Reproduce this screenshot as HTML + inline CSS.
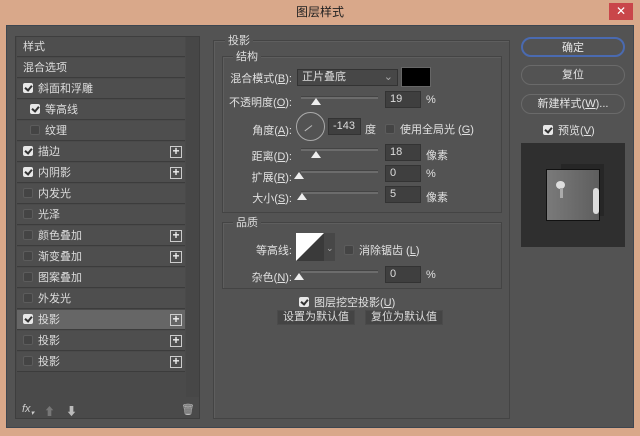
<!DOCTYPE html>
<html><head><meta charset="utf-8"><style>
*{margin:0;padding:0;box-sizing:border-box}
body{width:640px;height:436px;background:#d9a88a;position:relative;overflow:hidden;font-family:"Liberation Sans","Noto Sans CJK SC",sans-serif;font-size:11px;color:#e0e0e0}
.a{position:absolute}
.title{left:0;top:0;width:640px;height:25px;text-align:center;line-height:25px;font-size:12px;color:#222}
.close{left:609px;top:3px;width:24px;height:17px;background:#c9464a;color:#fff;text-align:center;line-height:17px;font-size:12px}
.dlg{left:6px;top:25px;width:628px;height:403px;background:#535353;border:1px solid #3d4650}
.list{left:15px;top:36px;width:185px;height:383px;background:#4a4a4a;border:1px solid #3e3e3e}
.row{position:absolute;left:1px;width:168px;height:20px;background:#4e4e4e;border-bottom:1px solid #3c3c3c;line-height:20px;padding-left:6px;color:#ddd}
.row.sel{background:#666}
.cb{display:inline-block;width:10px;height:10px;border-radius:2px;background:#444;border:1px solid #5c5c5c;vertical-align:-1px;margin-right:5px;position:relative}
.cb.on{background:#e8e8e8;border-color:#e8e8e8}
.cb.on:after{content:"";position:absolute;left:2px;top:0px;width:3px;height:5px;border:solid #333;border-width:0 2px 2px 0;transform:rotate(40deg)}
.plus{position:absolute;right:3px;top:4px;width:12px;height:12px;border:1px solid #ccc;line-height:9px;text-align:center;font-size:12px;color:#eee;font-weight:bold}
.grp{border:1px solid #444;box-shadow:1px 1px 0 #5e5e5e inset}
.lbl{position:absolute;background:#535353;padding:0 3px;color:#ddd}
.r{text-align:right;width:80px}
.slider{position:absolute;height:3px;background:#6c6c6c;border-top:1px solid #444}
.thumb{position:absolute;width:0;height:0;border-left:5px solid transparent;border-right:5px solid transparent;border-bottom:7px solid #eee}
.in{position:absolute;height:17px;background:#3f3f3f;border:1px solid #333;line-height:15px;padding-left:4px;color:#ddd}
.btn{position:absolute;left:521px;width:104px;height:20px;border:1px solid #6a6a6a;border-radius:10px;text-align:center;line-height:18px;color:#e6e6e6}
.sbtn{position:absolute;height:15px;background:#444;border:1px solid #4b4b4b;text-align:center;line-height:13px;color:#ddd}
</style></head><body>
<div class="a title">图层样式</div>
<div class="a close">✕</div>
<div class="a dlg"></div>
<div class="a list">
<div class="row" style="top:0">样式</div>
<div class="row" style="top:21px">混合选项</div>
<div class="row" style="top:42px"><span class="cb on"></span>斜面和浮雕</div>
<div class="row" style="top:63px;padding-left:13px"><span class="cb on"></span>等高线</div>
<div class="row" style="top:84px;padding-left:13px"><span class="cb"></span>纹理</div>
<div class="row" style="top:105px"><span class="cb on"></span>描边<span class="plus">+</span></div>
<div class="row" style="top:126px"><span class="cb on"></span>内阴影<span class="plus">+</span></div>
<div class="row" style="top:147px"><span class="cb"></span>内发光</div>
<div class="row" style="top:168px"><span class="cb"></span>光泽</div>
<div class="row" style="top:189px"><span class="cb"></span>颜色叠加<span class="plus">+</span></div>
<div class="row" style="top:210px"><span class="cb"></span>渐变叠加<span class="plus">+</span></div>
<div class="row" style="top:231px"><span class="cb"></span>图案叠加</div>
<div class="row" style="top:252px"><span class="cb"></span>外发光</div>
<div class="row sel" style="top:273px"><span class="cb on"></span>投影<span class="plus">+</span></div>
<div class="row" style="top:294px"><span class="cb"></span>投影<span class="plus">+</span></div>
<div class="row" style="top:315px"><span class="cb"></span>投影<span class="plus">+</span></div>
<div class="a" style="left:170px;top:0;width:13px;height:360px;background:#474747"></div>
<div class="a" style="left:6px;top:366px;color:#ccc;font-style:italic;font-size:11px">fx<sub style="font-size:7px">▾</sub></div>
<div class="a" style="left:28px;top:366px;color:#777">⬆</div>
<div class="a" style="left:50px;top:366px;color:#bbb">⬇</div>
<div class="a" style="left:165px;top:366px;color:#bbb">🗑</div>
</div>

<div class="a grp" style="left:213px;top:40px;width:297px;height:379px"></div>
<div class="lbl" style="left:225px;top:32px">投影</div>
<div class="a grp" style="left:222px;top:56px;width:280px;height:157px"></div>
<div class="lbl" style="left:233px;top:48px">结构</div>

<div class="a r" style="left:212px;top:70px">混合模式(<u>B</u>):</div>
<div class="in" style="left:297px;top:69px;width:101px;background:#474747">正片叠底<span style="position:absolute;right:4px;color:#aaa">⌄</span></div>
<div class="a" style="left:401px;top:67px;width:30px;height:20px;background:#000;border:1px solid #666"></div>

<div class="a r" style="left:212px;top:94px">不透明度(<u>O</u>):</div>
<div class="slider" style="left:301px;top:96px;width:77px"></div><div class="thumb" style="left:311px;top:98px"></div>
<div class="in" style="left:385px;top:91px;width:36px">19</div><div class="a" style="left:426px;top:94px">%</div>

<div class="a r" style="left:212px;top:122px">角度(<u>A</u>):</div>
<div class="a" style="left:296px;top:112px;width:29px;height:29px;border:1px solid #aaa;border-radius:50%"></div>
<div class="a" style="left:303px;top:125px;width:9px;height:1px;background:#bbb;transform:rotate(-37deg);transform-origin:right"></div>
<div class="in" style="left:328px;top:118px;width:33px">-143</div><div class="a" style="left:365px;top:121px">度</div>
<div class="a" style="left:385px;top:121px"><span class="cb"></span>使用全局光 (<u>G</u>)</div>

<div class="a r" style="left:212px;top:148px">距离(<u>D</u>):</div>
<div class="slider" style="left:301px;top:148px;width:77px"></div><div class="thumb" style="left:311px;top:151px"></div>
<div class="in" style="left:385px;top:144px;width:36px">18</div><div class="a" style="left:426px;top:147px">像素</div>

<div class="a r" style="left:212px;top:169px">扩展(<u>R</u>):</div>
<div class="slider" style="left:301px;top:170px;width:77px"></div><div class="thumb" style="left:294px;top:172px"></div>
<div class="in" style="left:385px;top:165px;width:36px">0</div><div class="a" style="left:426px;top:168px">%</div>

<div class="a r" style="left:212px;top:190px">大小(<u>S</u>):</div>
<div class="slider" style="left:301px;top:191px;width:77px"></div><div class="thumb" style="left:297px;top:193px"></div>
<div class="in" style="left:385px;top:186px;width:36px">5</div><div class="a" style="left:426px;top:189px">像素</div>

<div class="a grp" style="left:222px;top:222px;width:280px;height:67px"></div>
<div class="lbl" style="left:233px;top:214px">品质</div>
<div class="a r" style="left:212px;top:242px">等高线:</div>
<svg class="a" style="left:296px;top:233px" width="40" height="29"><rect x="0" y="0" width="28" height="28" fill="#fff"/><polygon points="0,28 28,0 28,28" fill="#3a3a3a"/><rect x="28" y="0" width="11" height="28" fill="#474747"/><text x="30" y="18" fill="#aaa" font-size="9">⌄</text></svg>
<div class="a" style="left:344px;top:242px"><span class="cb"></span>消除锯齿 (<u>L</u>)</div>
<div class="a r" style="left:212px;top:269px">杂色(<u>N</u>):</div>
<div class="slider" style="left:301px;top:270px;width:77px"></div><div class="thumb" style="left:294px;top:273px"></div>
<div class="in" style="left:385px;top:266px;width:36px">0</div><div class="a" style="left:426px;top:269px">%</div>

<div class="a" style="left:299px;top:294px"><span class="cb on"></span>图层挖空投影(<u>U</u>)</div>
<div class="sbtn" style="left:277px;top:310px;width:78px">设置为默认值</div>
<div class="sbtn" style="left:365px;top:310px;width:78px">复位为默认值</div>

<div class="btn" style="top:37px;border:2px solid #4a6ab0">确定</div>
<div class="btn" style="top:65px">复位</div>
<div class="btn" style="top:94px">新建样式(<u>W</u>)...</div>
<div class="a" style="left:543px;top:122px"><span class="cb on"></span>预览(<u>V</u>)</div>
<div class="a" style="left:521px;top:143px;width:104px;height:104px;background:#2f2f2f"></div>
<div class="a" style="left:561px;top:164px;width:43px;height:52px;background:#262626"></div>
<div class="a" style="left:546px;top:169px;width:54px;height:52px;background:linear-gradient(90deg,#7a7a7a,#5e5e5e);border:1px solid #111"></div>
<div class="a" style="left:556px;top:181px;width:9px;height:8px;background:#ddd;border-radius:50%"></div>
<div class="a" style="left:560px;top:188px;width:3px;height:10px;background:#aaa"></div>
<div class="a" style="left:593px;top:188px;width:6px;height:26px;background:#ddd;border-radius:3px"></div>
</body></html>
